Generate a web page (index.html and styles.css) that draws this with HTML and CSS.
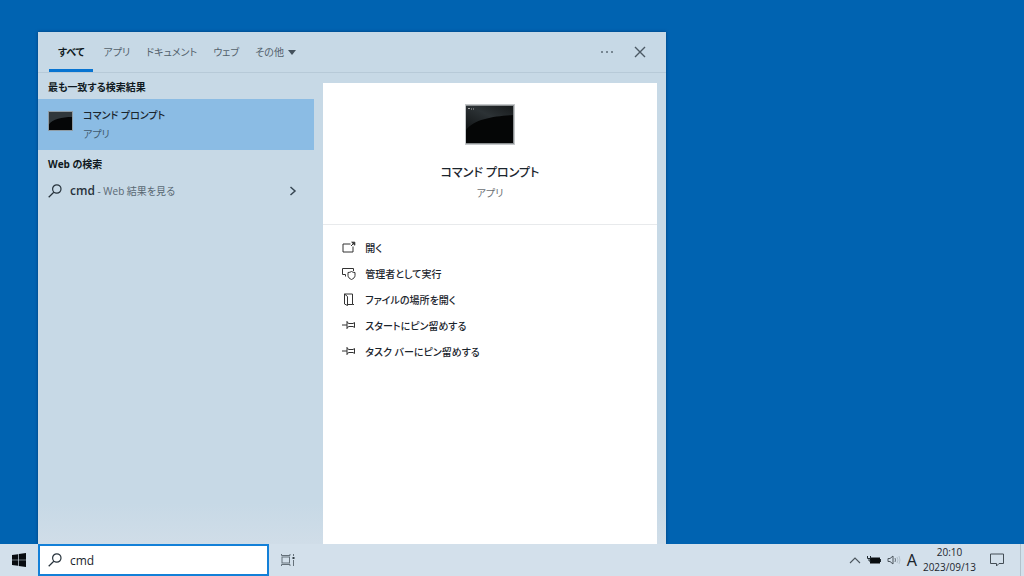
FILE: index.html
```html
<!DOCTYPE html>
<html lang="ja">
<head>
<meta charset="utf-8">
<title>検索</title>
<link rel="stylesheet" href="styles.css">
</head>
<body>
<div class="desktop">
  <main class="workspace">
    <section class="panel" aria-label="検索">
      <header class="panel-header">
        <nav class="tabs">
          <button class="tab tab-active">すべて</button>
          <button class="tab">アプリ</button>
          <button class="tab">ドキュメント</button>
          <button class="tab">ウェブ</button>
          <button class="tab">その他<svg class="caret" viewBox="0 0 8 5"><path d="M0 0h8L4 5z"/></svg></button>
        </nav>
        <div class="header-actions">
          <button class="icon-button" aria-label="オプション"><svg width="14" height="12" viewBox="0 0 14 12"><g fill="#5d6b76"><circle cx="2" cy="6" r="1"/><circle cx="7" cy="6" r="1"/><circle cx="12" cy="6" r="1"/></g></svg></button>
          <button class="icon-button" aria-label="閉じる"><svg width="12" height="12" viewBox="0 0 12 12"><path d="M1 1l10 10M11 1L1 11" stroke="#4c5964" stroke-width="1.4" fill="none"/></svg></button>
        </div>
      </header>
      <div class="panel-body">
        <div class="results">
          <h2 class="group-title">最も一致する検索結果</h2>
          <button class="best-match">
            <svg class="app-icon" viewBox="0 0 50 40" preserveAspectRatio="none"><rect width="50" height="40" fill="#8f9ca5"/><rect x="2" y="2" width="46" height="36" fill="#050607"/><path d="M2 2h46v10C28 12 9 16 2 27z" fill="#30373b"/></svg>
            <span class="best-text"><span class="best-name">コマンド プロンプト</span><span class="best-kind">アプリ</span></span>
          </button>
          <h2 class="group-title group-web">Web の検索</h2>
          <button class="web-result">
            <svg class="search-icon" viewBox="0 0 14 14"><circle cx="8.8" cy="5" r="4.2"/><path d="M5.8 8.2L.7 13.2"/></svg>
            <span class="web-text"><span class="query">cmd</span> - Web 結果を見る</span>
            <svg class="chevron" viewBox="0 0 8 10"><path d="M1.5 1l4.5 4-4.5 4"/></svg>
          </button>
        </div>
        <article class="preview">
          <div class="preview-head">
            <svg class="preview-icon" viewBox="0 0 50 41">
              <defs><linearGradient id="gloss" x1="0" y1="1" x2="1" y2="0"><stop offset="0" stop-color="#111415"/><stop offset=".55" stop-color="#2c3235"/><stop offset="1" stop-color="#171a1b"/></linearGradient></defs>
              <rect width="50" height="41" fill="#c5c8ca"/><rect x="1" y="1" width="48" height="39" fill="#8c9092"/><rect x="1" y="2" width="47" height="37" fill="#050606"/>
              <path d="M1 2h47v9C29 12 9 15 1 26z" fill="url(#gloss)"/><path d="M3 4.500h2M6 5h1M8 5h1" stroke="#aaa" stroke-width="1"/>
            </svg>
            <h1 class="preview-name">コマンド プロンプト</h1>
            <p class="preview-kind">アプリ</p>
          </div>
          <div class="actions">
            <button class="action"><svg class="action-icon" viewBox="0 0 14 14"><path d="M8.500 3H1v8h10V5.500M9 5l3-3"/><path d="M9.700 1.200h3.100v3z" fill="#333"/></svg>開く</button>
            <button class="action"><svg class="action-icon" viewBox="0 0 14 14"><path d="M3.500 9.500V7.500H.5v-6h11V4M9.500 4.500q1.500 1 3.500 1v3c0 2-1.500 3-3.500 4C7.500 11.500 6 10.500 6 8.500v-3q2 0 3.500-1z"/></svg>管理者として実行</button>
            <button class="action"><svg class="action-icon" viewBox="0 0 14 14"><path d="M2.500 1h8v10.500H6M2.500 1v10l3 1.500V3.500L2.500 1M10.500 11.500H12"/></svg>ファイルの場所を開く</button>
            <button class="action"><svg class="action-icon" viewBox="0 0 14 14"><path d="M0 6h5M5 2v8M5 3.500l2 1h4l1.500-1v5l-1.500-1H7l-2 1"/></svg>スタートにピン留めする</button>
            <button class="action"><svg class="action-icon" viewBox="0 0 14 14"><path d="M0 6h5M5 2v8M5 3.500l2 1h4l1.500-1v5l-1.500-1H7l-2 1"/></svg>タスク バーにピン留めする</button>
          </div>
        </article>
      </div>
    </section>
  </main>
  <footer class="taskbar">
    <button class="start" aria-label="スタート"><svg width="14" height="14" viewBox="0 0 14 14"><path d="M0 2l6-.8v5.500H0zM6.700 1.100L14 0v6.700H6.700zM0 7.300h6v5.500L0 12zM6.700 7.300H14V14l-7.300-1z" fill="#080c10"/></svg></button>
    <label class="search-box">
      <svg class="search-icon" viewBox="0 0 14 14"><circle cx="8.8" cy="5" r="4.200"/><path d="M5.800 8.200L.7 13.200"/></svg>
      <input class="search-input" type="text" value="cmd" aria-label="検索">
    </label>
    <button class="task-view" aria-label="タスク ビュー"><svg width="16" height="14" viewBox="0 0 16 14"><g fill="none" stroke="#65717a"><rect x="2" y="4" width="7.500" height="6"/><path d="M1.500 1v1.500H10V1M1.500 13v-1.500H10V13M13.500 1v2M13.500 7v6"/></g><rect x="12.500" y="4" width="2" height="2" fill="#333e46"/></svg></button>
    <div class="tray">
      <button class="tray-button" aria-label="隠れているインジケーター"><svg width="12" height="8" viewBox="0 0 12 8"><path d="M1 7l5-5 5 5" fill="none" stroke="#4c565e" stroke-width="1.100"/></svg></button>
      <svg width="14" height="10" viewBox="0 0 14 10"><path d="M3 2.500h10v6H3z" fill="#090d10"/><path d="M13.500 4v3M.5 1v2.500h3V1M2 3.500V6h2" fill="none" stroke="#202a31"/></svg>
      <svg width="14" height="10" viewBox="0 0 14 10"><path d="M1 3.500h2L6 1v8L3 6.500H1z" fill="none" stroke="#4c565e"/><path d="M8 3q1 2 0 4" fill="none" stroke="#69757e"/><path d="M10 2q2 3 0 6M12 1q2 4 0 8" fill="none" stroke="#b3c1cb"/></svg>
      <span class="ime">A</span>
      <time class="clock" datetime="2023-09-13T20:10"><span>20:10</span><span>2023/09/13</span></time>
      <button class="tray-button notice" aria-label="通知"><svg width="14" height="14" viewBox="0 0 14 14"><path d="M.5 1h13v9.500H9L6.500 13v-2.500h-6z" fill="none" stroke="#434d55"/></svg></button>
      <span class="show-desktop"></span>
    </div>
  </footer>
</div>
</body>
</html>
```
FILE: styles.css
```css
* { box-sizing: border-box; }
body {
  margin: 0;
  font-family: "Open Sans", "Noto Sans CJK JP", sans-serif;
  font-size: 10px;
  line-height: 16px;
  font-feature-settings: "palt";
  color: #1b252d;
}
button {
  margin: 0;
  padding: 0;
  border: 0;
  background: none;
  font: inherit;
  font-feature-settings: inherit;
  color: inherit;
  text-align: left;
}
h1, h2, p { margin: 0; font-weight: 400; }
svg { flex: none; display: block; }
.desktop { display: flex; flex-direction: column; min-height: 100vh; background: #0063b1; }
.workspace { flex: 1; display: flex; padding: 32px 35% 0 38px; }
.panel {
  flex: 1;
  display: flex;
  flex-direction: column;
  background: linear-gradient(#c7d9e6 92%, #d0dde8);
  box-shadow: 0 0 3px #003d79;
}
.panel-header {
  display: flex;
  justify-content: space-between;
  height: 41px;
  padding: 0 20px 0 11px;
  border-bottom: 1px solid #b7cad8;
}
.tabs { display: flex; }
.tab { display: flex; align-items: center; padding: 0 8px; color: #53616c; white-space: nowrap; }
.tab-active { margin-right: 2px; padding: 3px 9px 0; border-bottom: 3px solid #0874d1; color: #101921; font-weight: 700; }
.caret { width: 8px; height: 5px; margin-left: 4px; fill: #43515c; }
.header-actions { display: flex; align-items: center; gap: 20px; }
.panel-body { flex: 1; display: flex; gap: 9px; padding-right: 9px; }
.results { flex: 276; }
.group-title { padding: 6px 10px 4px; font-size: 10px; font-weight: 700; color: #101921; }
.best-match { display: flex; width: 100%; height: 51px; padding: 8px 10px; gap: 10px; background: #8bbce4; }
.app-icon { width: 25px; height: 20px; margin-top: 4px; }
.best-text { display: flex; flex-direction: column; gap: 3px; }
.best-name { font-weight: 500; }
.best-kind { color: #41596d; }
.web-result { display: flex; align-items: center; width: 100%; height: 30px; padding: 0 17px 0 10px; }
.search-icon { width: 14px; height: 14px; fill: none; stroke: #26323b; stroke-width: 1.2; }
.web-text { flex: 1; margin-left: 8px; color: #596873; }
.query { font-size: 12px; font-weight: 600; color: #27323b; }
.chevron { width: 8px; height: 10px; fill: none; stroke: #374652; stroke-width: 1.5; }
.preview { flex: 333; margin-top: 10px; background: #fff; }
.preview-head { display: flex; flex-direction: column; align-items: center; padding: 21px 0 23px; border-bottom: 1px solid #e8eaec; }
.preview-icon { width: 50px; height: 41px; }
.preview-name { margin-top: 16px; font-size: 12px; line-height: 24px; font-weight: 500; }
.preview-kind { font-size: 10px; color: #6b6f73; }
.actions { display: flex; flex-direction: column; padding: 10px 19px; }
.action { display: flex; align-items: center; gap: 9px; height: 26px; font-weight: 500; }
.action-icon { width: 14px; height: 14px; fill: none; stroke: #333; }
.taskbar { display: flex; align-items: stretch; height: 32px; background: #d3e0eb; }
.start { display: flex; align-items: center; justify-content: center; width: 38px; }
.search-box { display: flex; align-items: center; gap: 8px; width: 231px; padding: 0 8px; border: 2px solid #1380d8; background: #fff; }
.search-input { flex: 1; min-width: 0; border: 0; padding: 2px 0 0; outline: 0; font: inherit; font-size: 12px; color: #1b252d; background: none; }
.task-view { display: flex; align-items: center; justify-content: center; width: 38px; }
.tray { display: flex; align-items: center; gap: 6px; margin-left: auto; }
.ime { font: 16px/20px "Noto Sans", sans-serif; }
.clock { display: flex; flex-direction: column; align-items: center; font-size: 10px; line-height: 15px; }
.notice { margin-left: 8px; }
.show-desktop { width: 4px; height: 100%; margin-left: 10px; border-left: 1px solid #b3c1cb; }
```
